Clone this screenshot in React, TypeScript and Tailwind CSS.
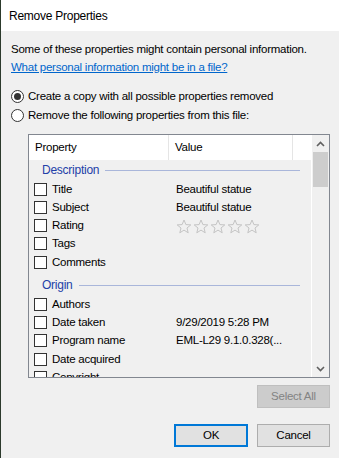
import React from "react";

const font = { fontFamily: '"Segoe UI", "Liberation Sans", Arial, sans-serif' };

const Check = () => <span className="w-[13px] h-[13px] border border-[#333333] bg-white shrink-0" />;

const Star = () => (
  <svg width="16" height="15" viewBox="0 0 16 15" className="shrink-0">
    <path
      d="M8 1 L9.9 5.6 L14.8 5.9 L11 9 L12.2 13.8 L8 11.1 L3.8 13.8 L5 9 L1.2 5.9 L6.1 5.6 Z"
      fill="none"
      stroke="#c4c4c4"
      strokeWidth="1"
      strokeLinejoin="round"
    />
  </svg>
);

const Group = ({ label, first }: { label: string; first?: boolean }) => (
  <div className={`flex items-center h-[20px] pl-[13px] pr-[11px] ${first ? "" : "mt-[4px]"}`}>
    <span className="text-[#2340a8] text-[12px]">{label}</span>
    <span className="flex-1 h-px bg-[#a9b6da] ml-[6px]" />
  </div>
);

const Row = ({ name, value }: { name: string; value?: React.ReactNode }) => (
  <div className="flex items-center h-[18.25px] pl-[5px] shrink-0">
    <Check />
    <span className="w-[124px] ml-[5px] whitespace-nowrap">{name}</span>
    <span className="whitespace-nowrap">{value}</span>
  </div>
);

const Radio = ({ checked, label }: { checked?: boolean; label: string }) => (
  <div className="flex items-center h-[19px]">
    <span className="w-[13px] h-[13px] rounded-full border border-[#333333] bg-white flex items-center justify-center shrink-0">
      {checked && <span className="w-[7px] h-[7px] rounded-full bg-[#333333]" />}
    </span>
    <span className="ml-[4px] whitespace-nowrap">{label}</span>
  </div>
);

export default function App() {
  return (
    <div
      className="w-[339px] h-[458px] bg-[#f0f0f0] text-[11.5px] tracking-[-0.25px] text-black flex flex-col border-l border-[#2c3a2c] overflow-hidden"
      style={font}
    >
      <div className="h-[31px] bg-white flex items-center pl-[8px] shrink-0 text-[12px]">
        <span>Remove Properties</span>
      </div>

      <div className="flex flex-col pl-[10px] pr-[9px] pt-[9px]">
        <div className="leading-[18px] whitespace-nowrap">Some of these properties might contain personal information.</div>
        <div className="leading-[18px] text-[#0066cc] underline whitespace-nowrap">What personal information might be in a file?</div>

        <div className="mt-[11px] flex flex-col">
          <Radio checked label="Create a copy with all possible properties removed" />
          <Radio label="Remove the following properties from this file:" />
        </div>

        <div className="ml-[17px] mt-[9px] h-[244px] border border-[#828790] flex overflow-hidden shrink-0">
          <div className="flex-1 flex flex-col overflow-hidden">
            <div className="h-[25px] bg-white flex items-center shrink-0">
              <span className="w-[140px] pl-[6px] h-full flex items-center border-r border-[#e5e5e5]">Property</span>
              <span className="w-[124px] pl-[6px] h-full flex items-center border-r border-[#e5e5e5]">Value</span>
              <span className="flex-1" />
            </div>
            <div className="flex flex-col border-r border-white flex-1">
              <Group label="Description" first />
              <Row name="Title" value="Beautiful statue" />
              <Row name="Subject" value="Beautiful statue" />
              <Row
                name="Rating"
                value={
                  <span className="flex gap-[1px] pt-[1px]">
                    <Star />
                    <Star />
                    <Star />
                    <Star />
                    <Star />
                  </span>
                }
              />
              <Row name="Tags" />
              <Row name="Comments" />
              <Group label="Origin" />
              <Row name="Authors" />
              <Row name="Date taken" value="9/29/2019 5:28 PM" />
              <Row name="Program name" value="EML-L29 9.1.0.328(..." />
              <Row name="Date acquired" />
              <Row name="Copyright" />
            </div>
          </div>
          <div className="w-[17px] bg-[#f0f0f0] flex flex-col shrink-0">
            <div className="h-[17px] flex items-center justify-center">
              <svg width="9" height="6" viewBox="0 0 9 6">
                <path d="M1 5 L4.5 1.5 L8 5" fill="none" stroke="#606060" strokeWidth="1.6" />
              </svg>
            </div>
            <div className="mx-[1px] h-[35px] bg-[#cdcdcd]" />
            <div className="flex-1" />
            <div className="h-[17px] flex items-center justify-center">
              <svg width="9" height="6" viewBox="0 0 9 6">
                <path d="M1 1 L4.5 4.5 L8 1" fill="none" stroke="#606060" strokeWidth="1.6" />
              </svg>
            </div>
          </div>
        </div>

        <div className="flex justify-end mt-[7px]">
          <div className="w-[73px] h-[23px] bg-[#cccccc] border border-[#bfbfbf] text-[#838383] flex items-center justify-center">
            Select All
          </div>
        </div>

        <div className="flex justify-end gap-[9px] mt-[16px]">
          <div className="w-[74px] h-[23px] bg-[#e1e1e1] border-2 border-[#0078d7] flex items-center justify-center">OK</div>
          <div className="w-[73px] h-[23px] bg-[#e1e1e1] border border-[#adadad] flex items-center justify-center">Cancel</div>
        </div>
      </div>
    </div>
  );
}
